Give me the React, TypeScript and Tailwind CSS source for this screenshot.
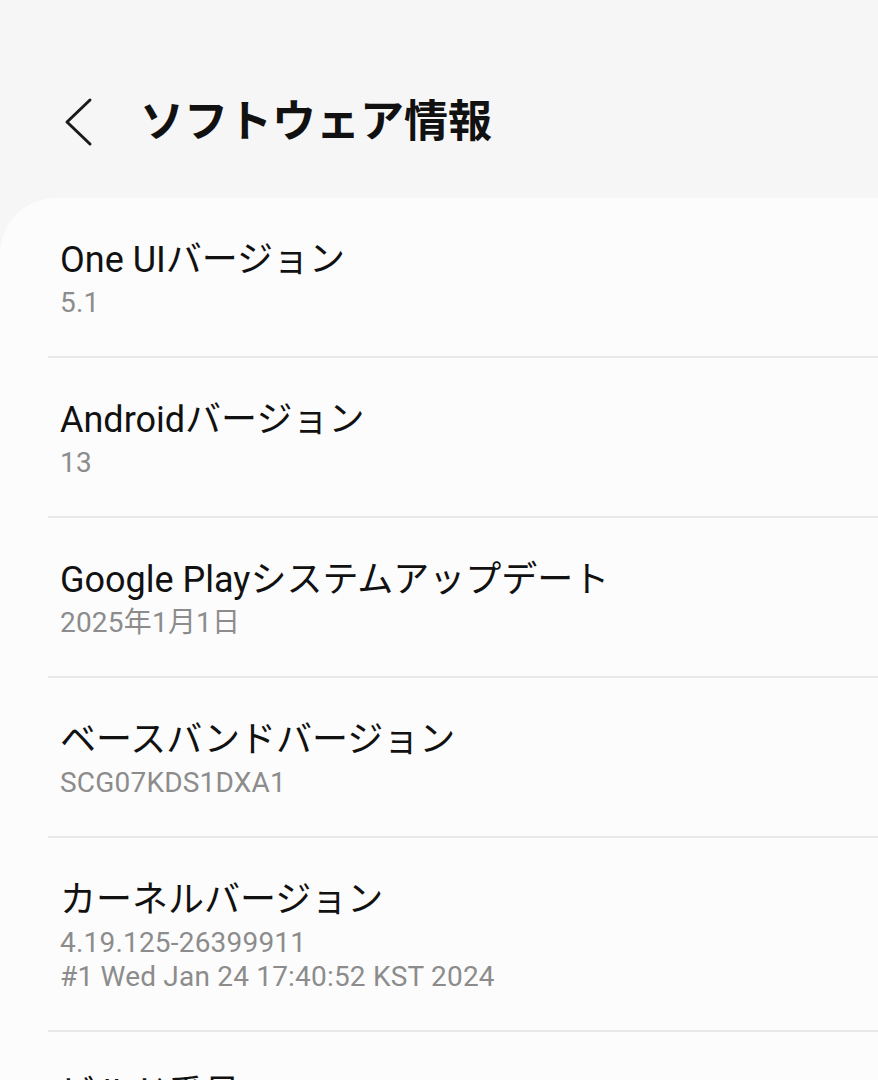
import React from 'react'

type Item = { title: string; lines: string[] }

const ITEMS: Item[] = [
  { title: 'One UIバージョン', lines: ['5.1'] },
  { title: 'Androidバージョン', lines: ['13'] },
  { title: 'Google Playシステムアップデート', lines: ['2025年1月1日'] },
  { title: 'ベースバンドバージョン', lines: ['SCG07KDS1DXA1'] },
  { title: 'カーネルバージョン', lines: ['4.19.125-26399911', '#1 Wed Jan 24 17:40:52 KST 2024'] },
  { title: 'ビルド番号', lines: ['TP1A.220624.014.SCG07KDS1DXA1'] },
]

export default function App() {
  return (
    <div
      className="w-[878px] h-[1080px] overflow-hidden bg-[#f6f6f6] flex flex-col"
      style={{ fontFamily: 'Roboto, "Noto Sans CJK JP", sans-serif' }}
    >
      {/* Header */}
      <div className="h-[198px] shrink-0 pt-[94px]">
        <div className="h-[56px] flex items-center">
          <button className="ml-[58px] w-[40px] h-[56px] flex items-center justify-center">
            <svg width="34" height="50" viewBox="0 0 34 50" fill="none">
              <path d="M29 3 L6 25 L29 47" stroke="#1a1a1a" strokeWidth="3" strokeLinecap="round" strokeLinejoin="round" />
            </svg>
          </button>
          <h1 className="ml-[42px] text-[44px] leading-[56px] font-bold text-[#111]">ソフトウェア情報</h1>
        </div>
      </div>

      {/* Card */}
      <div className="flex-1 bg-[#fcfcfc] rounded-tl-[56px]">
        {ITEMS.map((item, i) => (
          <div key={item.title}>
            {i > 0 && <div className="ml-[48px] h-[2px] bg-[#e8e8e8]" />}
            <div className="pl-[60px] pr-6 pt-[40px] pb-[36px]">
              <div className="text-[36px] leading-[44px] text-[#111]">{item.title}</div>
              <div className="mt-[4px]">
                {item.lines.map(l => (
                  <div key={l} className="text-[28px] leading-[34px] text-[#8c8c8c] tracking-[0.2px]">{l}</div>
                ))}
              </div>
            </div>
          </div>
        ))}
      </div>
    </div>
  )
}
